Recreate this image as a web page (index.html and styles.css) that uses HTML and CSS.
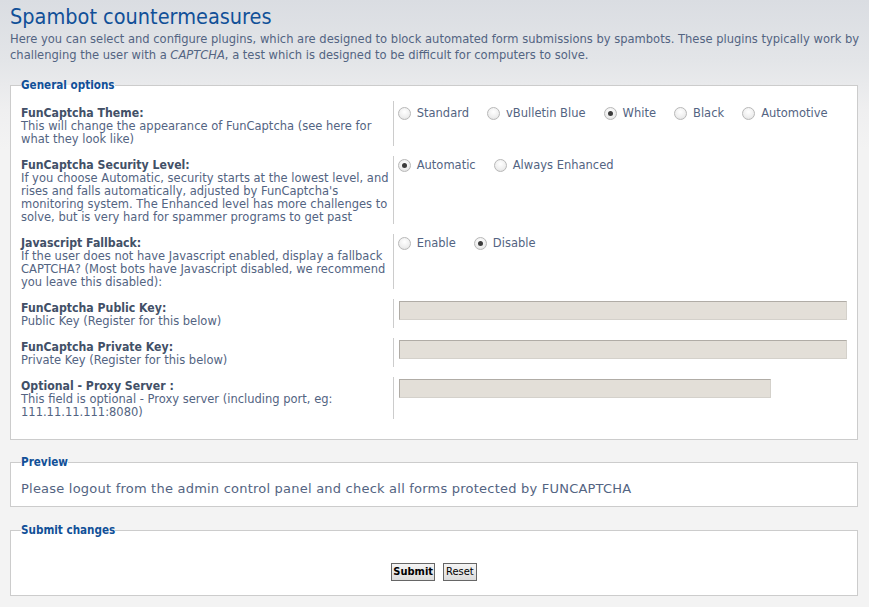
FILE: index.html
```html
<!DOCTYPE html>
<html lang="en">
<head>
<meta charset="utf-8">
<title>Spambot countermeasures</title>
<link rel="stylesheet" href="styles.css">
</head>
<body>
<div class="page">
  <h1 class="title">Spambot countermeasures</h1>
  <p class="intro">Here you can select and configure plugins, which are designed to block automated form submissions by spambots. These plugins typically work by challenging the user with a <em>CAPTCHA</em>, a test which is designed to be difficult for computers to solve.</p>

  <fieldset class="box box-general">
    <legend class="box-legend">General options</legend>

    <dl class="opt opt-first">
      <dt class="opt-term"><span class="opt-label">FunCaptcha Theme:</span><span class="opt-desc">This will change the appearance of FunCaptcha (see here for what they look like)</span></dt>
      <dd class="opt-value opt-radios">
        <label class="radio"><span class="radio-dot"></span>Standard</label>
        <label class="radio"><span class="radio-dot"></span>vBulletin Blue</label>
        <label class="radio"><span class="radio-dot radio-on"></span>White</label>
        <label class="radio"><span class="radio-dot"></span>Black</label>
        <label class="radio"><span class="radio-dot"></span>Automotive</label>
      </dd>
    </dl>

    <dl class="opt">
      <dt class="opt-term"><span class="opt-label">FunCaptcha Security Level:</span><span class="opt-desc">If you choose Automatic, security starts at the lowest level, and rises and falls automatically, adjusted by FunCaptcha's monitoring system. The Enhanced level has more challenges to solve, but is very hard for spammer programs to get past</span></dt>
      <dd class="opt-value opt-radios">
        <label class="radio"><span class="radio-dot radio-on"></span>Automatic</label>
        <label class="radio"><span class="radio-dot"></span>Always Enhanced</label>
      </dd>
    </dl>

    <dl class="opt">
      <dt class="opt-term"><span class="opt-label">Javascript Fallback:</span><span class="opt-desc">If the user does not have Javascript enabled, display a fallback CAPTCHA? (Most bots have Javascript disabled, we recommend you leave this disabled):</span></dt>
      <dd class="opt-value opt-radios">
        <label class="radio"><span class="radio-dot"></span>Enable</label>
        <label class="radio"><span class="radio-dot radio-on"></span>Disable</label>
      </dd>
    </dl>

    <dl class="opt">
      <dt class="opt-term"><span class="opt-label">FunCaptcha Public Key:</span><span class="opt-desc">Public Key (Register for this below)</span></dt>
      <dd class="opt-value"><input class="field" type="text" value=""></dd>
    </dl>

    <dl class="opt">
      <dt class="opt-term"><span class="opt-label">FunCaptcha Private Key:</span><span class="opt-desc">Private Key (Register for this below)</span></dt>
      <dd class="opt-value"><input class="field" type="text" value=""></dd>
    </dl>

    <dl class="opt">
      <dt class="opt-term"><span class="opt-label">Optional - Proxy Server :</span><span class="opt-desc">This field is optional - Proxy server (including port, eg: 111.11.11.111:8080)</span></dt>
      <dd class="opt-value"><input class="field field-short" type="text" value=""></dd>
    </dl>
  </fieldset>

  <fieldset class="box box-preview">
    <legend class="box-legend">Preview</legend>
    <p class="preview-text">Please logout from the admin control panel and check all forms protected by FUNCAPTCHA</p>
  </fieldset>

  <fieldset class="box box-submit">
    <legend class="box-legend">Submit changes</legend>
    <p class="buttons">
      <button class="btn btn-primary" type="submit">Submit</button>
      <button class="btn" type="reset">Reset</button>
    </p>
  </fieldset>
</div>
</body>
</html>
```

FILE: styles.css
```css
html, body {
  margin: 0;
  padding: 0;
}

body {
  background: linear-gradient(to bottom, #dadde2 0px, #e3e5e8 60px, #efeff0 110px, #f3f3f3 150px, #f3f3f3 100%);
  min-height: 607px;
  font-family: "DejaVu Sans", "Liberation Sans", sans-serif;
  color: #536482;
}

.page {
  padding: 0 11px 12px 10px;
}

.title {
  margin: 0;
  padding-top: 4px;
  font-family: "DejaVu Sans Condensed", "DejaVu Sans", sans-serif;
  font-stretch: condensed;
  font-size: 21.5px;
  line-height: 26px;
  font-weight: normal;
  color: #115098;
}

.intro {
  margin: 1px -3px 15px 0;
  font-family: "DejaVu Sans Condensed", "DejaVu Sans", sans-serif;
  font-stretch: condensed;
  font-size: 12.8px;
  line-height: 16px;
  color: #536482;
}

.box {
  margin: 0 0 15px 0;
  padding: 8px 10px 10px 10px;
  border: 1px solid #cccccc;
  background: #ffffff;
  min-width: 0;
}

.box-preview {
  padding-top: 10px;
  padding-bottom: 9px;
}

.box-submit {
  margin-top: 16px;
}

.box-legend {
  padding: 0;
  font-family: "DejaVu Sans Condensed", "DejaVu Sans", sans-serif;
  font-stretch: condensed;
  font-size: 11.6px;
  line-height: 15px;
  font-weight: bold;
  color: #115098;
}

.opt {
  display: grid;
  grid-template-columns: 45% 1fr;
  margin: 0 0 10px 0;
}

.opt-term {
  padding-top: 3px;
  font-size: 11.5px;
  line-height: 13px;
}

.opt-first .opt-term,
.opt-first .opt-value {
  padding-top: 6px;
}

.opt-label {
  display: block;
  font-family: "DejaVu Sans Condensed", "DejaVu Sans", sans-serif;
  font-stretch: condensed;
  font-size: 12.2px;
  font-weight: bold;
  color: #425067;
}

.opt-desc {
  display: block;
  color: #536482;
}

.opt-value {
  margin: 0;
  padding: 3px 0 0 5px;
  border-left: 1px solid #cccccc;
  font-size: 11.5px;
  line-height: 13px;
  min-width: 0;
}

.opt-radios {
  display: flex;
  flex-wrap: wrap;
  align-content: flex-start;
  align-items: flex-start;
  column-gap: 18px;
  padding-left: 4px;
}

.radio {
  display: inline-flex;
  align-items: center;
  color: #536482;
}

.radio-dot {
  width: 11px;
  height: 11px;
  margin: 0 6px 0 0;
  border: 1px solid #b8b8b8;
  border-radius: 50%;
  background: radial-gradient(circle at 50% 35%, #ffffff 0%, #eeeeee 60%, #dadada 100%);
  box-sizing: content-box;
  position: relative;
}

.radio-on::after {
  content: "";
  position: absolute;
  left: 3px;
  top: 3px;
  width: 5px;
  height: 5px;
  border-radius: 50%;
  background: #3c3c3c;
}

.field {
  display: block;
  box-sizing: border-box;
  width: 100%;
  height: 19px;
  margin: -1px 0 0 0;
  padding: 0 3px;
  border: 1px solid;
  border-color: #b0aca6 #d4d1cb #d4d1cb #b0aca6;
  background: #e3dfd8;
  font: inherit;
}

.field-short {
  width: 372px;
}

.preview-text {
  margin: 0;
  font-size: 13px;
  line-height: 17px;
  letter-spacing: 0.22px;
  color: #536482;
}

.buttons {
  margin: 17px 0 4px 0;
  display: flex;
  justify-content: center;
  gap: 8px;
}

.btn {
  height: 18px;
  padding: 0 2px;
  border: 1px solid #666666;
  background: linear-gradient(to bottom, #f4f4f4, #dcdcdc);
  font-family: "DejaVu Sans Condensed", "DejaVu Sans", sans-serif;
  font-stretch: condensed;
  font-size: 11px;
  line-height: 16px;
  color: #000000;
  border-radius: 0;
}

.btn-primary {
  padding: 0 1px;
  font-weight: bold;
}
```
